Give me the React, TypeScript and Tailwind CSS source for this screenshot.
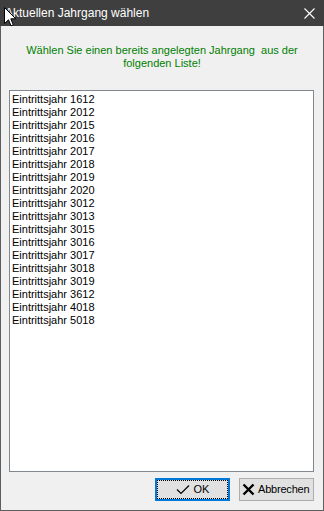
const jahre = ['1612', '2012', '2015', '2016', '2017', '2018', '2019', '2020', '3012', '3013', '3015', '3016', '3017', '3018', '3019', '3612', '4018', '5018']

function Cursor() {
  return (
    <svg className="absolute left-[3px] top-[7px]" width="13" height="20" viewBox="0 0 13 20">
      <path d="M0.5 0.5 L0.5 16.5 L4.5 12.8 L7 18.8 L9.3 17.8 L6.8 11.8 L11.8 11.8 Z" fill="#fff" stroke="#000" strokeWidth="1" />
    </svg>
  )
}

export default function App() {
  return (
    <div className="relative w-[324px] h-[511px] bg-[#f0f0f0] border border-t-0 border-[#5e5e5e] flex flex-col font-['Liberation_Sans',Arial,sans-serif]">
      {/* title bar */}
      <div className="h-[26px] -mx-px bg-[#3f3f3f] flex items-center justify-between pl-[5px] pr-[9px] text-white text-[12px]">
        <span>Aktuellen Jahrgang wählen</span>
        <svg width="11" height="11" viewBox="0 0 11 11">
          <path d="M0.5 0.5 L10.5 10.5 M10.5 0.5 L0.5 10.5" stroke="#fff" strokeWidth="1.1" />
        </svg>
      </div>
      <Cursor />

      <p className="pt-[18px] text-center text-[11px] leading-[13px] text-[#008000] whitespace-pre">
        {'Wählen Sie einen bereits angelegten Jahrgang  aus der\nfolgenden Liste!'}
      </p>

      <div className="mt-[20px] ml-[8px] mr-[9px] flex-1 bg-white border border-[#828790] pt-[2px] pl-[2px] text-[11px] leading-[13px] text-black">
        {jahre.map(j => <div key={j}>Eintrittsjahr {j}</div>)}
      </div>

      <div className="mt-[6px] mb-[9px] mr-[9px] flex justify-end gap-[9px] text-[11px] text-black">
        <button className="w-[75px] h-[23px] bg-[#e1e1e1] border-2 border-[#0078d7] flex">
          <span className="flex-1 border border-dotted border-black flex items-center justify-center gap-[4px]">
            <svg width="14" height="11" viewBox="0 0 14 11">
              <path d="M1 5.5 L5 9.5 L13 1.5" fill="none" stroke="#000" strokeWidth="1.2" />
            </svg>
            OK
          </span>
        </button>
        <button className="w-[75px] h-[23px] bg-[#e1e1e1] border border-[#adadad] flex items-center pl-[2px] gap-[3px] tracking-[-0.2px]">
          <svg width="13" height="13" viewBox="0 0 13 13">
            <path d="M1.5 1.5 L11.5 11.5 M11.5 1.5 L1.5 11.5" stroke="#000" strokeWidth="2.4" />
          </svg>
          Abbrechen
        </button>
      </div>
    </div>
  )
}
